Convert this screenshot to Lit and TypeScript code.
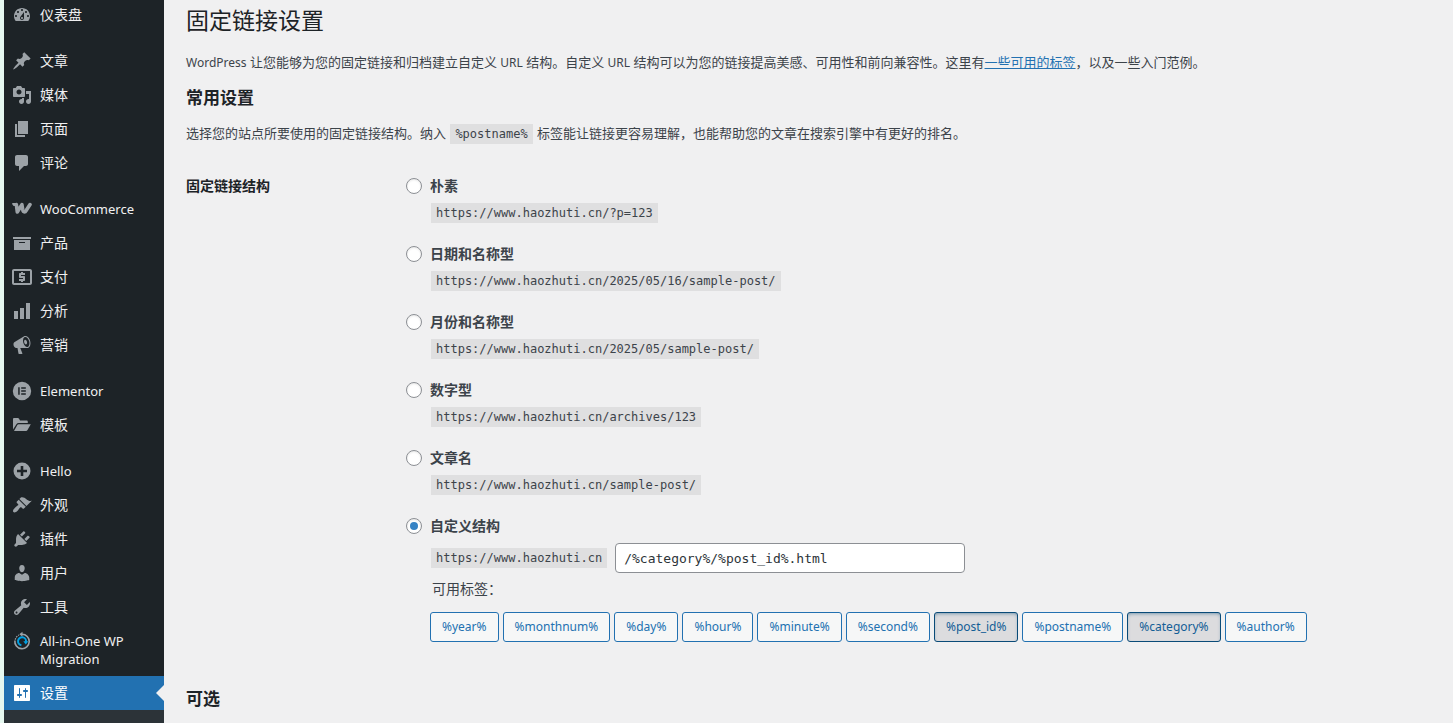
import { LitElement, html, css, svg } from "lit";
import { customElement, property, state } from "lit/decorators.js";
import { classMap } from "lit/directives/class-map.js";

const icons: Record<string, unknown> = {
  dashboard: svg`<path d="M3.76 16h12.48c1.1-1.37 1.76-3.11 1.76-5 0-4.42-3.58-8-8-8s-8 3.58-8 8c0 1.89.66 3.63 1.76 5zM10 4c.55 0 1 .45 1 1s-.45 1-1 1-1-.45-1-1 .45-1 1-1zM6 6c.55 0 1 .45 1 1s-.45 1-1 1-1-.45-1-1 .45-1 1-1zm8 0c.55 0 1 .45 1 1s-.45 1-1 1-1-.45-1-1 .45-1 1-1zm-5.37 5.55L12 7v6c0 1.1-.9 2-2 2s-2-.9-2-2c0-.57.24-1.08.63-1.45zM4 10c.55 0 1 .45 1 1s-.45 1-1 1-1-.45-1-1 .45-1 1-1zm12 0c.55 0 1 .45 1 1s-.45 1-1 1-1-.45-1-1 .45-1 1-1zm-5 3c0-.55-.45-1-1-1s-1 .45-1 1 .45 1 1 1 1-.45 1-1z"/>`,
  post: svg`<path d="M10.44 3.02l1.82-1.82 6.36 6.35-1.83 1.82c-1.05-.68-2.48-.57-3.41.36l-.75.75c-.92.93-1.04 2.35-.35 3.41l-1.83 1.82-2.41-2.41-2.8 2.79c-.42.42-3.38 2.71-3.8 2.29s1.86-3.39 2.28-3.81l2.79-2.79L4.1 9.36l1.83-1.82c1.05.69 2.48.57 3.4-.36l.75-.75c.93-.92 1.05-2.35.36-3.41z"/>`,
  media: svg`<path d="M13 11V4c0-.55-.45-1-1-1h-1.67L9 1H5L3.67 3H2c-.55 0-1 .45-1 1v7c0 .55.45 1 1 1h10c.55 0 1-.45 1-1zM7 4.5c1.38 0 2.5 1.12 2.5 2.5S8.38 9.5 7 9.5 4.5 8.38 4.5 7 5.62 4.5 7 4.5zM14 6h5v10.5c0 1.38-1.12 2.5-2.5 2.5S14 17.88 14 16.5s1.12-2.5 2.5-2.5c.17 0 .34.02.5.05V9h-3V6zm-4 8.05V13h2v3.5c0 1.38-1.12 2.5-2.5 2.5S7 17.88 7 16.5 8.12 14 9.5 14c.17 0 .34.02.5.05z"/>`,
  page: svg`<path d="M6 15V2h10v13H6zm-1 1h8v2H3V5h2v11z"/>`,
  comments: svg`<path d="M5 2h9c1.1 0 2 .9 2 2v7c0 1.1-.9 2-2 2h-2l-5 5v-5H5c-1.1 0-2-.9-2-2V4c0-1.1.9-2 2-2z"/>`,
  woo: svg`<path fill="none" stroke="currentColor" stroke-width="3.600" stroke-linejoin="round" stroke-linecap="round" d="M4.400 5.600l.9 7.400L9.900 5.600l.9 5.400c.5 2.600 2.400 2.300 3.500.3L18 5.600"/><path d="M.2 3.900h4.200v3H2C1 6.900.2 5.500.2 3.900z"/>`,
  products: svg`<path d="M19 4v2H1V4h18zM2 7h16v10H2V7zm11 3V9H7v1h6z"/>`,
  payments: svg`<path fill-rule="evenodd" d="M2 2h16c1.100 0 2 .9 2 2v12c0 1.100-.9 2-2 2H2c-1.100 0-2-.9-2-2V4c0-1.100.9-2 2-2zm0 2v12h16V4H2z"/><path d="M9 5h2v1h2v2H9v1h3c.6 0 1 .4 1 1v3c0 .6-.4 1-1 1h-1v1H9v-1H7v-2h4v-1H8c-.6 0-1-.4-1-1V7c0-.6.4-1 1-1h1V5z"/>`,
  analytics: svg`<path d="M18 18V2h-4v16h4zm-6 0V7H8v11h4zm-6 0v-8H2v8h4z"/>`,
  marketing: svg`<path d="M18.15 5.94c.46 1.62.38 3.22-.02 4.48-.42 1.28-1.26 2.18-2.3 2.48-.16.06-.26.06-.4.06-.06.02-.12.02-.18.02-.06.02-.14.02-.22.02h-6.8l2.22 5.5c.02.14-.06.26-.14.34-.08.1-.24.16-.34.16H6.95c-.1 0-.26-.06-.34-.16-.08-.08-.16-.2-.14-.34l-1-5.5H4.25l-.02-.02c-.5.06-1.08-.18-1.54-.62s-.88-1.08-1.06-1.88c-.24-.8-.2-1.56-.02-2.2.18-.62.58-1.08 1.06-1.3l.02-.02 9-5.4c.1-.06.18-.1.24-.16.06-.04.14-.08.24-.12.16-.08.28-.12.5-.18 1.04-.3 2.24.1 3.22.98s1.84 2.24 2.26 3.86zm-2.58 5.98h-.02c.4-.1.74-.34 1.04-.7.58-.7.86-1.76.86-3.04 0-.64-.1-1.3-.28-1.98-.34-1.36-1.02-2.5-1.78-3.24s-1.68-1.1-2.46-.88c-.82.22-1.4.96-1.7 2-.32 1.04-.28 2.36.06 3.72.38 1.36 1 2.5 1.8 3.24.78.74 1.62 1.1 2.48.88zm-2.54-7.08c.22-.04.42-.02.62.04.38.16.76.48 1.02 1s.42 1.2.42 1.78c0 .3-.04.56-.12.8-.18.48-.44.84-.86.94-.34.1-.8-.06-1.14-.4s-.64-.86-.78-1.5c-.18-.62-.12-1.24.02-1.72s.48-.84.82-.94z"/>`,
  elementor: svg`<path fill-rule="evenodd" d="M10 .8a9.200 9.200 0 1 0 0 18.400A9.200 9.200 0 0 0 10 .8zM6.200 6.200h1.500v7.600H6.200V6.200zm3 0h4.600v1.500H9.200V6.200zm0 3.050h4.600v1.500H9.200v-1.500zm0 3.050h4.600v1.500H9.200v-1.500z"/>`,
  templates: svg`<path d="M1 14.500V4.200C1 3.500 1.500 3 2.200 3h3.600c.5 0 .8.2 1.100.6L8 5.500h6.500c.8 0 1.300.5 1.300 1.300V8H6.500c-.8 0-1.400.3-1.900.9L1 14.500zM2 16l3.300-5.900c.3-.6.7-.8 1.300-.8h12.200l-3.300 5.800c-.4.600-.8.900-1.500.9H2z"/>`,
  plus: svg`<path fill-rule="evenodd" d="M10 1.500a8.500 8.500 0 1 0 0 17 8.500 8.500 0 0 0 0-17zM8.700 5h2.600v3.700H15v2.600h-3.700V15H8.700v-3.700H5V8.700h3.700V5z"/>`,
  appearance: svg`<path d="M14.48 11.06L7.41 3.99l1.5-1.5c.5-.56 2.3-.47 3.51.32 1.21.8 1.43 1.28 2.91 2.1 1.18.64 2.45 1.26 4.45.85zm-.71.71L6.7 4.7 4.93 6.47c-.39.39-.39 1.02 0 1.41l1.06 1.06c.39.39.39 1.03 0 1.42-.6.6-1.43 1.11-2.21 1.69-.35.26-.7.53-1.01.84C1.43 14.23.4 16.08 1.4 17.07c.99 1 2.84-.03 4.18-1.36.31-.31.58-.66.85-1.02.57-.78 1.08-1.61 1.69-2.21.39-.39 1.02-.39 1.41 0l1.06 1.06c.39.39 1.02.39 1.41 0z"/>`,
  plugins: svg`<path d="M13.11 4.36L9.87 7.6 8 5.73l3.24-3.24c.35-.34 1.05-.2 1.56.32.52.51.66 1.21.31 1.55zm-8 1.77l.91-1.12 9.01 9.01-1.19.84c-.71.71-2.63 1.16-3.82 1.16H6.14L4.9 17.26c-.59.59-1.54.59-2.12 0-.59-.58-.59-1.53 0-2.12l1.24-1.24v-3.88c0-1.13.4-3.19 1.09-3.89zm7.26 3.97l3.24-3.24c.34-.35 1.04-.21 1.55.31.52.51.66 1.21.31 1.55l-3.24 3.25z"/>`,
  users: svg`<path d="M10 9.25c-2.27 0-2.73-3.44-2.73-3.44C7 4.02 7.82 2 9.97 2c2.16 0 2.98 2.02 2.71 3.81 0 0-.41 3.44-2.68 3.44zm0 2.57L12.72 10c2.39 0 4.52 2.33 4.52 4.53v2.49s-3.65 1.13-7.24 1.13c-3.65 0-7.24-1.13-7.24-1.13v-2.49c0-2.25 1.94-4.48 4.47-4.48z"/>`,
  tools: svg`<path d="M16.68 9.77c-1.34 1.34-3.3 1.67-4.95.99l-5.41 6.52c-.99.99-2.59.99-3.58 0s-.99-2.59 0-3.57l6.52-5.42c-.68-1.65-.35-3.61.99-4.95 1.28-1.28 3.12-1.62 4.72-1.06l-2.89 2.89 2.82 2.82 2.86-2.87c.53 1.58.18 3.39-1.08 4.65zM3.81 16.21c.4.39 1.04.39 1.43 0 .4-.4.4-1.04 0-1.43-.39-.4-1.03-.4-1.43 0-.39.39-.39 1.03 0 1.43z"/>`,
  migration: svg`<path fill="none" stroke="currentColor" stroke-width="1.600" d="M10 3.300A7.200 7.200 0 1 1 2.900 9.500"/><path d="M10.500.8v5L7.300 3.300z"/><path fill="none" stroke="currentColor" stroke-width="1.200" stroke-dasharray="1.500 1" d="M3.200 8.600A7.200 7.200 0 0 1 7 4"/><path fill="none" stroke="#00a0e3" stroke-width="2" d="M9.400 14.200A4 4 0 1 1 14 10.800"/><path fill="#00a0e3" d="M11.300 10.300h5l-2.500 3.200z"/>`,
  settings: svg`<path d="M18 17V3c0-.6-.4-1-1-1H3c-.6 0-1 .4-1 1v14c0 .6.4 1 1 1h14c.6 0 1-.4 1-1zM8 11h1c.55 0 1 .45 1 1s-.45 1-1 1H8v1.5c0 .28-.22.5-.5.5s-.5-.22-.5-.5V13H6c-.55 0-1-.45-1-1s.45-1 1-1h1V5.5c0-.28.22-.5.5-.5s.5.22.5.5V11zm5-2h-1c-.55 0-1-.45-1-1s.45-1 1-1h1V5.5c0-.28.22-.5.5-.5s.5.22.5.5V7h1c.55 0 1 .45 1 1s-.45 1-1 1h-1v5.5c0 .28-.22.5-.5.5s-.5-.22-.5-.5V9z"/>`,
};

interface MenuItem { icon: string; label: string; latin?: boolean; current?: boolean; }

const menuGroups: MenuItem[][] = [
  [{ icon: "dashboard", label: "仪表盘" }],
  [
    { icon: "post", label: "文章" },
    { icon: "media", label: "媒体" },
    { icon: "page", label: "页面" },
    { icon: "comments", label: "评论" },
  ],
  [
    { icon: "woo", label: "WooCommerce", latin: true },
    { icon: "products", label: "产品" },
    { icon: "payments", label: "支付" },
    { icon: "analytics", label: "分析" },
    { icon: "marketing", label: "营销" },
  ],
  [
    { icon: "elementor", label: "Elementor", latin: true },
    { icon: "templates", label: "模板" },
  ],
  [
    { icon: "plus", label: "Hello", latin: true },
    { icon: "appearance", label: "外观" },
    { icon: "plugins", label: "插件" },
    { icon: "users", label: "用户" },
    { icon: "tools", label: "工具" },
    { icon: "migration", label: "All-in-One WP Migration", latin: true },
    { icon: "settings", label: "设置", current: true },
  ],
];

const site = "https://www.haozhuti.cn";

const structures = [
  { id: "plain", label: "朴素", example: "/?p=123" },
  { id: "day-name", label: "日期和名称型", example: "/2025/05/16/sample-post/" },
  { id: "month-name", label: "月份和名称型", example: "/2025/05/sample-post/" },
  { id: "numeric", label: "数字型", example: "/archives/123" },
  { id: "post-name", label: "文章名", example: "/sample-post/" },
];

const tags = ["year", "monthnum", "day", "hour", "minute", "second", "post_id", "postname", "category", "author"];

@customElement("admin-menu")
export class AdminMenu extends LitElement {
  static styles = css`
    :host {
      display: flex;
      flex-direction: column;
      background: #1d2327;
      font-size: 14px;
      line-height: 18px;
    }
    .menu {
      display: flex;
      flex-direction: column;
      gap: 12px;
      margin-top: -2px;
    }
    .group { list-style: none; margin: 0; padding: 0; }
    .link {
      display: flex;
      align-items: flex-start;
      gap: 8px;
      padding: 8px;
      color: #f0f0f1;
      text-decoration: none;
    }
    .latin { font-size: 13px; }
    .icon {
      flex: none;
      width: 20px;
      height: 20px;
      margin: -1px 0;
      fill: currentColor;
      color: #9ca2a7;
    }
    .current { position: relative; background: #2271b1; color: #fff; }
    .current .icon { color: #fff; }
    .current::after {
      content: "";
      position: absolute;
      right: 0;
      top: 9px;
      border: 8px solid transparent;
      border-left-width: 0;
      border-right-color: #f0f0f1;
    }
    .submenu { flex: 1; min-height: 13px; background: #2c3338; }
  `;

  render() {
    return html`
      <nav class="menu">
        ${menuGroups.map((group) => html`
          <ul class="group">
            ${group.map((item) => html`
              <li>
                <a href="#" class=${classMap({ link: true, latin: !!item.latin, current: !!item.current })}>
                  <svg class="icon" viewBox="0 0 20 20" aria-hidden="true">${icons[item.icon]}</svg>
                  <span>${item.label}</span>
                </a>
              </li>`)}
          </ul>`)}
      </nav>
      <div class="submenu"></div>
    `;
  }
}

@customElement("permalink-settings")
export class PermalinkSettings extends LitElement {
  @property() selected = "custom";
  @state() private structure = "/%category%/%post_id%.html";

  static styles = css`
    :host { display: block; padding: 7px 20px 0 22px; }
    h1, h2, h3, p, fieldset { margin: 0; padding: 0; border: 0; min-width: 0; }
    h1 { font-size: 23px; font-weight: 400; line-height: 26px; color: #1d2327; }
    h2 { font-size: 17px; font-weight: 600; line-height: 24px; color: #1d2327; }
    p { line-height: 20px; }
    .intro { margin: 19px 0 13px; }
    .choose { margin-top: 13px; }
    .latin { font-size: 12px; }
    a { color: #2271b1; }
    code {
      display: inline-block;
      padding: 0 5px;
      background: #dfdfe0;
      font: 12px/20px "DejaVu Sans Mono", monospace;
    }
    .inline-code { margin: 0 1px; }
    .form { display: grid; grid-template-columns: 220px 1fr; margin: 32px 0 45px; font-size: 14px; }
    .heading { font-size: 14px; font-weight: 600; line-height: 20px; color: #1d2327; }
    .options { display: flex; flex-direction: column; gap: 21px; }
    .option { display: grid; grid-template-columns: 16px 1fr; column-gap: 8px; row-gap: 7px; }
    .option label { font-weight: 600; line-height: 20px; }
    .radio {
      appearance: none;
      display: grid;
      place-content: center;
      width: 16px;
      height: 16px;
      margin: 2px 0;
      border: 1px solid #8c8f94;
      border-radius: 50%;
      background: #fff;
      box-shadow: inset 0 1px 2px rgba(0, 0, 0, 0.1);
    }
    .radio:checked::before {
      content: "";
      width: 8px;
      height: 8px;
      border-radius: 50%;
      background: #3582c4;
    }
    .detail { display: flex; flex-direction: column; align-items: flex-start; grid-column: 2; padding-left: 1px; }
    .custom { display: flex; flex-wrap: wrap; align-items: center; gap: 8px; }
    .text {
      box-sizing: border-box;
      width: 350px;
      max-width: 100%;
      height: 30px;
      padding: 0 8px;
      border: 1px solid #8c8f94;
      border-radius: 4px;
      background: #fff;
      color: #2c3338;
      font: 13px "DejaVu Sans Mono", monospace;
    }
    .available { padding: 6px 1px 13px; line-height: 20px; }
    .tags { display: flex; flex-wrap: wrap; gap: 4px; margin-left: -1px; }
    .tag {
      height: 30px;
      padding: 0 11px;
      border: 1px solid #2271b1;
      border-radius: 3px;
      background: #f6f7f7;
      color: #2271b1;
      font: inherit;
      font-size: 12px;
      line-height: 28px;
    }
    .active {
      border-color: #0a4b78;
      background: #dcdcde;
      color: #135e96;
      box-shadow: inset 0 2px 5px -3px #0a4b78;
    }
  `;

  private select(id: string) { this.selected = id; }

  private toggle(tag: string) {
    const token = `%${tag}%`;
    this.structure = this.structure.includes(token)
      ? this.structure.replace(`/${token}`, "")
      : `${this.structure}/${token}`;
    this.selected = "custom";
  }

  private radio(id: string) {
    return html`<input class="radio" type="radio" name="structure" id=${id}
      .checked=${this.selected === id} @change=${() => this.select(id)}>`;
  }

  render() {
    return html`
      <h1>固定链接设置</h1>
      <p class="intro"><span class="latin">WordPress</span> 让您能够为您的固定链接和归档建立自定义 <span class="latin">URL</span> 结构。自定义 <span class="latin">URL</span> 结构可以为您的链接提高美感、可用性和前向兼容性。这里有<a href="#">一些可用的标签</a>，以及一些入门范例。</p>
      <h2>常用设置</h2>
      <p class="choose">选择您的站点所要使用的固定链接结构。纳入 <code class="inline-code">%postname%</code> 标签能让链接更容易理解，也能帮助您的文章在搜索引擎中有更好的排名。</p>
      <div class="form">
        <h3 class="heading" id="structure-heading">固定链接结构</h3>
        <fieldset class="options" aria-labelledby="structure-heading">
          ${structures.map((s) => html`
            <div class="option">
              ${this.radio(s.id)}
              <label for=${s.id}>${s.label}</label>
              <div class="detail"><code>${site}${s.example}</code></div>
            </div>`)}
          <div class="option">
            ${this.radio("custom")}
            <label for="custom">自定义结构</label>
            <div class="detail">
              <div class="custom">
                <code>${site}</code>
                <input class="text" type="text" aria-label="自定义结构" .value=${this.structure}
                  @input=${(e: Event) => { this.structure = (e.target as HTMLInputElement).value; }}>
              </div>
              <div class="available">可用标签：</div>
              <div class="tags">
                ${tags.map((t) => html`<button type="button"
                  class=${classMap({ tag: true, active: this.structure.includes(`%${t}%`) })}
                  @click=${() => this.toggle(t)}>%${t}%</button>`)}
              </div>
            </div>
          </div>
        </fieldset>
      </div>
      <h2>可选</h2>
    `;
  }
}

@customElement("app-root")
export class AppRoot extends LitElement {
  static styles = css`
    :host {
      display: grid;
      grid-template-columns: 160px 1fr;
      box-sizing: border-box;
      min-height: 100vh;
      overflow: hidden;
      border-left: 4px solid #e6f8f0;
      background: #f0f0f1;
      color: #3c434a;
      font-family: "Noto Sans", "Noto Sans CJK SC", sans-serif;
      font-size: 13px;
    }
  `;

  render() {
    return html`<admin-menu></admin-menu><permalink-settings></permalink-settings>`;
  }
}
